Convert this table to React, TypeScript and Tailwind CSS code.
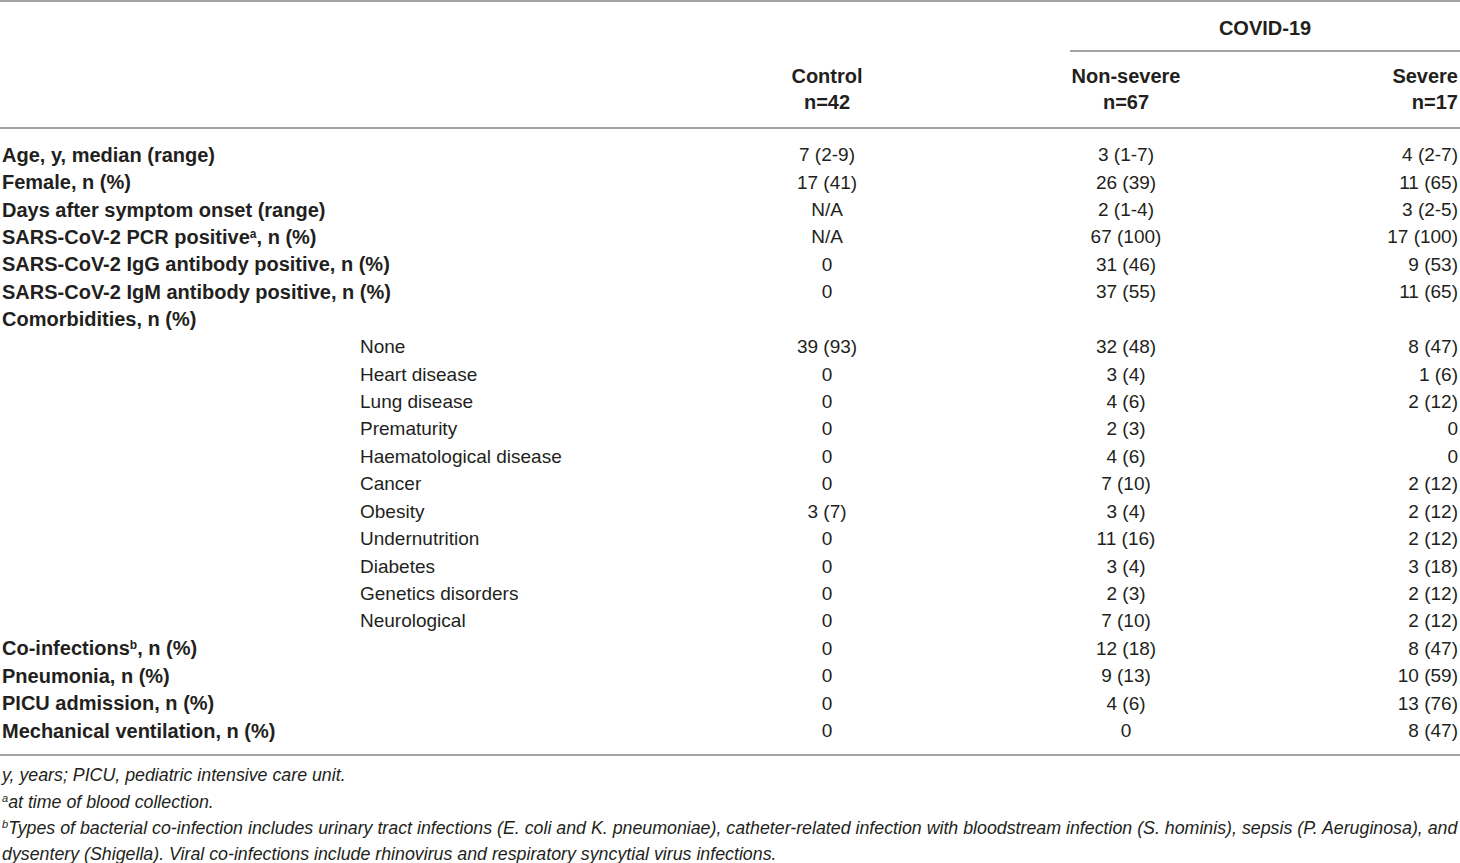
import React from 'react';

type Row = { label: React.ReactNode; sub?: boolean; control?: string; nonSevere?: string; severe?: string };

const rows: Row[] = [
  { label: 'Age, y, median (range)', control: '7 (2-9)', nonSevere: '3 (1-7)', severe: '4 (2-7)' },
  { label: 'Female, n (%)', control: '17 (41)', nonSevere: '26 (39)', severe: '11 (65)' },
  { label: 'Days after symptom onset (range)', control: 'N/A', nonSevere: '2 (1-4)', severe: '3 (2-5)' },
  {
    label: (
      <>
        SARS-CoV-2 PCR positive<sup className="text-[12px]">a</sup>, n (%)
      </>
    ),
    control: 'N/A',
    nonSevere: '67 (100)',
    severe: '17 (100)',
  },
  { label: 'SARS-CoV-2 IgG antibody positive, n (%)', control: '0', nonSevere: '31 (46)', severe: '9 (53)' },
  { label: 'SARS-CoV-2 IgM antibody positive, n (%)', control: '0', nonSevere: '37 (55)', severe: '11 (65)' },
  { label: 'Comorbidities, n (%)' },
  { label: 'None', sub: true, control: '39 (93)', nonSevere: '32 (48)', severe: '8 (47)' },
  { label: 'Heart disease', sub: true, control: '0', nonSevere: '3 (4)', severe: '1 (6)' },
  { label: 'Lung disease', sub: true, control: '0', nonSevere: '4 (6)', severe: '2 (12)' },
  { label: 'Prematurity', sub: true, control: '0', nonSevere: '2 (3)', severe: '0' },
  { label: 'Haematological disease', sub: true, control: '0', nonSevere: '4 (6)', severe: '0' },
  { label: 'Cancer', sub: true, control: '0', nonSevere: '7 (10)', severe: '2 (12)' },
  { label: 'Obesity', sub: true, control: '3 (7)', nonSevere: '3 (4)', severe: '2 (12)' },
  { label: 'Undernutrition', sub: true, control: '0', nonSevere: '11 (16)', severe: '2 (12)' },
  { label: 'Diabetes', sub: true, control: '0', nonSevere: '3 (4)', severe: '3 (18)' },
  { label: 'Genetics disorders', sub: true, control: '0', nonSevere: '2 (3)', severe: '2 (12)' },
  { label: 'Neurological', sub: true, control: '0', nonSevere: '7 (10)', severe: '2 (12)' },
  {
    label: (
      <>
        Co-infections<sup className="text-[12px]">b</sup>, n (%)
      </>
    ),
    control: '0',
    nonSevere: '12 (18)',
    severe: '8 (47)',
  },
  { label: 'Pneumonia, n (%)', control: '0', nonSevere: '9 (13)', severe: '10 (59)' },
  { label: 'PICU admission, n (%)', control: '0', nonSevere: '4 (6)', severe: '13 (76)' },
  { label: 'Mechanical ventilation, n (%)', control: '0', nonSevere: '0', severe: '8 (47)' },
];

const cols = 'grid grid-cols-[700px_254px_344px_1fr]';

const App: React.FC = () => {
  return (
    <div className="w-[1460px] bg-white text-[#231f20] font-['Liberation_Sans',Arial,sans-serif] text-[19px]">
      {/* Header */}
      <div className="border-t-2 border-[#a3a3a3]">
        <div className={`${cols} h-[50px]`}>
          <div className="col-start-3 col-span-2 ml-[116px] flex items-center justify-center pt-[3px] border-b-2 border-[#a3a3a3] font-bold text-[20px]">
            COVID-19
          </div>
        </div>
        <div className={`${cols} items-end pb-[12px] pt-[11px] leading-[26px] font-bold text-[20px] border-b-2 border-[#a3a3a3]`}>
          <div />
          <div className="text-center">
            Control
            <br />
            n=42
          </div>
          <div className="text-center">
            Non-severe
            <br />
            n=67
          </div>
          <div className="text-right pr-[2px]">
            Severe
            <br />
            n=17
          </div>
        </div>
      </div>

      {/* Body */}
      <div className="pt-[12px] pb-[10px] border-b-2 border-[#a3a3a3]">
        {rows.map((r, i) => (
          <div key={i} className={`${cols} h-[27.43px] items-center leading-none`}>
            <div className={r.sub ? 'pl-[360px]' : 'pl-[2px] font-bold text-[20px]'}>{r.label}</div>
            <div className="text-center">{r.control}</div>
            <div className="text-center">{r.nonSevere}</div>
            <div className="text-right pr-[2px]">{r.severe}</div>
          </div>
        ))}
      </div>

      {/* Footnotes */}
      <div className="pl-[2px] pt-[6px] italic text-[17.8px] leading-[26.3px]">
        <p>y, years; PICU, pediatric intensive care unit.</p>
        <p>
          <sup className="text-[11px]">a</sup>at time of blood collection.
        </p>
        <p className="whitespace-nowrap">
          <sup className="text-[11px]">b</sup>Types of bacterial co-infection includes urinary tract infections (E. coli and K. pneumoniae),
          catheter-related infection with bloodstream infection (S. hominis), sepsis (P. Aeruginosa), and
          <br />
          dysentery (Shigella). Viral co-infections include rhinovirus and respiratory syncytial virus infections.
        </p>
      </div>
    </div>
  );
};

export default App;
